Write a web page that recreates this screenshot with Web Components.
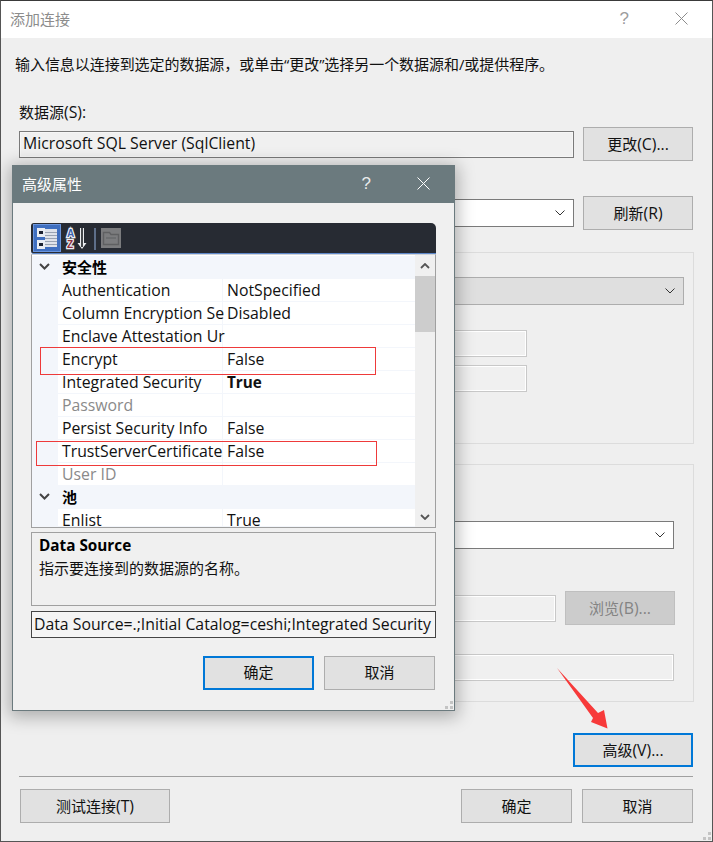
<!DOCTYPE html>
<html><head><meta charset="utf-8">
<style>
html,body{margin:0;padding:0;background:#efefef}
body{width:713px;height:842px;overflow:hidden;font:15px "Open Sans","Noto Sans CJK SC",sans-serif;color:#111}
</style></head><body>
<add-connection></add-connection>
<script>
const FONT='"Open Sans","Noto Sans CJK SC",sans-serif';
function def(name,css,html){
  customElements.define(name,class extends HTMLElement{
    constructor(){super();const s=this.attachShadow({mode:'open'});
      s.innerHTML='<style>'+css+'</style>'+(typeof html==='function'?html(this):html);}
  });
}
def('win-button',`
:host{display:flex;box-sizing:border-box;height:34px;align-items:center;justify-content:center;background:#e1e1e1;border:1px solid #adadad;font:15px ${FONT};color:#111;white-space:nowrap;padding-bottom:1px}
:host([primary]){border:2px solid #0078d7}
:host([disabled]){background:#ccc;border-color:#bfbfbf;color:#838383}
`,'<slot></slot>');
def('win-field',`
:host{display:flex;box-sizing:border-box;height:27px;align-items:center;background:#f0f0f0;border:1px solid #7a7a7a;padding:0 0 2px 3px;font:15.8px ${FONT};color:#111;white-space:nowrap;overflow:hidden;box-shadow:inset 0 0 0 1px #f6f6f6}
:host([disabled]){border-color:#c8c8c8;box-shadow:inset 0 0 0 1px #fff}
:host([dark]){border-color:#444;padding-left:2px}
`,'<slot></slot>');
def('win-combo',`
:host{display:flex;box-sizing:border-box;height:28px;align-items:center;justify-content:flex-end;background:#fff;border:1px solid #7a7a7a;padding-right:8px}
:host([disabled]){background:#dfdfdf;border-color:#adadad}
svg{display:block}
`,'<svg width="10" height="6" viewBox="0 0 10 6"><path d="M.5.5 5 5 9.5.5" fill="none" stroke="#333" stroke-width="1"/></svg>');
def('win-title',`
:host{display:flex;box-sizing:border-box;height:37px;align-items:center;padding:0 24px 2px 9px;background:#fff;color:#8c8c8c;font:15px ${FONT}}
:host([active]){background:#6b7a7e;color:#fff;padding-left:9px}
.t{flex:1}
.q{font:17px "Liberation Sans",sans-serif;margin-right:46px;opacity:.85}
svg{display:block}
`,`<span class="t"><slot></slot></span><span class="q">?</span><svg width="13" height="13" viewBox="0 0 13 13"><path d="M.5.5 12.500 12.500M12.500.5.5 12.500" stroke="currentColor" stroke-width="1" fill="none"/></svg>`);
def('group-box',`
:host{display:block;box-sizing:border-box;border:1px solid #dcdcdc}
`,'<slot></slot>');
def('prop-cat',`
:host{display:flex;box-sizing:border-box;height:23px;background:#f3f6fb;align-items:center;font:bold 15px ${FONT};color:#000;padding-bottom:2px}
.c{width:30px;display:flex;box-sizing:border-box;padding-left:7px}
svg{display:block}
`,`<span class="c"><svg width="11" height="7" viewBox="0 0 11 7"><path d="M1 1l4.500 4.500L10 1" fill="none" stroke="#444" stroke-width="2"/></svg></span><slot></slot>`);
def('prop-row',`
:host{display:flex;box-sizing:border-box;height:23px;background:#fff;font:15.8px ${FONT};color:#111;position:relative;box-shadow:inset 0 -1px 0 #f3f6fb}
.g{width:26px;background:#f3f6fb;flex:none}
.n{box-sizing:border-box;width:165px;padding:0 0 2px 4px;border-right:1px solid #f3f6fb;white-space:nowrap;display:flex;align-items:center;flex:none}
.v{padding:0 0 2px 4px;white-space:nowrap;display:flex;align-items:center}
:host([dim]) .n{color:#8a8a8a}
:host([strong]) .v{font-weight:bold;font-size:15.3px}
:host([short]){height:18px;line-height:14px}
:host([short]) .n,:host([short]) .v{padding-top:4px;padding-bottom:0;line-height:14px}
`,el=>`<span class="g"></span><span class="n">${el.getAttribute('name')}</span><span class="v">${el.getAttribute('value')||''}</span>`);
def('prop-toolbar',`
:host{display:flex;box-sizing:border-box;height:31px;background:#272b33;border-radius:3px 5px 0 3px;border-bottom:1px solid #5d87c9;padding:1px 2px 0 2px;align-items:flex-start}
svg{display:block}
text{font:bold 10px "Liberation Sans",sans-serif;paint-order:stroke;stroke:#eef1f6;stroke-width:2.5px}
`,`<svg width="120" height="28" viewBox="0 0 120 28">
<rect x=".5" y=".5" width="27" height="27" fill="#3f6fc0" stroke="#6a95dd"/>
<g fill="#dfe3ea"><rect x="12" y="5" width="12" height="18"/></g>
<g fill="#9aa3b2"><rect x="12" y="8" width="12" height="1"/><rect x="12" y="11" width="12" height="1"/><rect x="12" y="14" width="12" height="1"/><rect x="12" y="17" width="12" height="1"/><rect x="12" y="20" width="12" height="1"/></g>
<rect x="4" y="4" width="8" height="9" fill="#e9edf3"/><rect x="4" y="16" width="8" height="9" fill="#e9edf3"/>
<rect x="6" y="7" width="4" height="3" fill="#1c2230"/><rect x="6" y="19" width="4" height="3" fill="#1c2230"/>
<text x="34" y="13" fill="#3b62ad">A</text><text x="34" y="24" fill="#8e2f3e">Z</text>
<path d="M47 4h4v15h2.500l-4.500 6-4.500-6H47z" fill="#eceef1"/><path d="M49 4v19" stroke="#1b1d22" stroke-width="1.600"/>
<rect x="61" y="4" width="2" height="22" fill="#5e6f8a"/>
<rect x="68" y="4" width="20" height="20" fill="#7b7c7e"/><path d="M70.500 8.500h6l1.500 2h7.500v10h-15z" fill="none" stroke="#5f6062" stroke-width="1.400"/><path d="M73 14h10" stroke="#5f6062"/>
</svg>`);
def('prop-scroll',`
:host{display:flex;flex-direction:column;box-sizing:border-box;width:20px;background:#f0f0f0;align-items:center;flex:none}
.a{height:21px;width:100%;display:flex;align-items:center;justify-content:center}
.th{height:56px;width:100%;background:#cdcdcd}
.sp{flex:1}
svg{display:block}
`,`<div class="a"><svg width="10" height="6" viewBox="0 0 10 6"><path d="M1 5l4-4 4 4" fill="none" stroke="#555" stroke-width="1.800"/></svg></div><div class="th"></div><div class="sp"></div><div class="a"><svg width="10" height="6" viewBox="0 0 10 6"><path d="M1 1l4 4 4-4" fill="none" stroke="#555" stroke-width="1.800"/></svg></div>`);
def('prop-grid',`
:host{display:flex;box-sizing:border-box;height:274px;border:1px solid #a0a0a0;border-top-color:#cfd3d8;background:#fff}
.rows{flex:1;min-width:0;padding-top:1px;box-sizing:border-box}
`,`<div class="rows"><slot></slot></div><prop-scroll></prop-scroll>`);
def('grip-mark',`
:host{display:block;position:absolute;right:1px;bottom:1px;width:8px;height:8px}
svg{display:block}
`,`<svg width="8" height="8" fill="#c4c4c4"><rect x="5" y="0" width="3" height="3"/><rect x="0" y="5" width="3" height="3"/><rect x="5" y="5" width="3" height="3"/></svg>`);
def('advanced-props',`
:host{display:block;position:absolute;left:11px;top:164px;width:443px;height:546px;box-sizing:border-box;border:1px solid #6b7a7e;background:#f0f0f0;box-shadow:0 3px 16px 3px rgba(0,0,0,.28);z-index:2}
.body{padding:20px 18px 0 18px;position:relative}
.desc{box-sizing:border-box;height:74px;margin-top:4px;border:1px solid #a0a0a0;padding:1px 7px 0;font:15px/23px ${FONT};color:#111}
.desc b{display:block;color:#000;font-size:15.3px}
win-field{margin-top:5px;background:#f4f4f4}
.btns{display:flex;justify-content:flex-end;gap:10px;margin-top:18px;padding-right:1px}
win-button{width:111px;padding-bottom:3px}
.mark{position:absolute;box-sizing:border-box;border:1px solid #ee3a3a;z-index:3}
`,`<win-title active>高级属性</win-title>
<div class="body">
<prop-toolbar></prop-toolbar>
<prop-grid>
<prop-cat>安全性</prop-cat>
<prop-row name="Authentication" value="NotSpecified"></prop-row>
<prop-row name="Column Encryption Se" value="Disabled"></prop-row>
<prop-row name="Enclave Attestation Ur"></prop-row>
<prop-row name="Encrypt" value="False"></prop-row>
<prop-row name="Integrated Security" value="True" strong></prop-row>
<prop-row name="Password" dim></prop-row>
<prop-row name="Persist Security Info" value="False"></prop-row>
<prop-row name="TrustServerCertificate" value="False"></prop-row>
<prop-row name="User ID" dim></prop-row>
<prop-cat>池</prop-cat>
<prop-row name="Enlist" value="True" short></prop-row>
</prop-grid>
<div class="desc"><b>Data Source</b>指示要连接到的数据源的名称。</div>
<win-field dark>Data Source=.;Initial Catalog=ceshi;Integrated Security</win-field>
<div class="btns"><win-button primary>确定</win-button><win-button>取消</win-button></div>
<div class="mark" style="left:27px;top:144px;width:336px;height:28px"></div>
<div class="mark" style="left:23px;top:238px;width:341px;height:25px"></div>
</div>
<grip-mark></grip-mark>`);
def('add-connection',`
:host{display:block;position:relative;box-sizing:border-box;width:713px;height:842px;background:#efefef;border:1px solid #555;border-top-color:#3a3a3a;font:15px ${FONT};color:#111;overflow:hidden}
.l{font-size:15.8px}
.main{padding:0 19px 0 18px}
.intro{margin:16px 0 0 -4px;line-height:20px;height:20px;white-space:nowrap;letter-spacing:-.05px}
.lab{margin-top:28px;line-height:20px;height:20px}
.row{display:grid;grid-template-columns:555px 110px;column-gap:9px;align-items:center}
.r1{margin-top:5px}
.r2{margin-top:35px}
.g1{margin-top:22px;height:192px;display:flex;flex-direction:column;padding:24px 9px 0 0;align-items:flex-end;width:675px;box-sizing:border-box}
.g1 win-combo{width:664px}
.g1 .in{align-self:flex-start;width:507px;margin-top:25px}
.g1 .in + .in{margin-top:8px}
.g2{margin-top:20px;height:238px;width:675px;box-sizing:border-box;padding:56px 0 0 0}
.cb{display:flex;justify-content:flex-end;padding-right:19px}
.g2 win-combo{width:654px}
.g2row{display:flex;gap:9px;align-items:center;margin-top:42px}
.g2row win-field{width:536px}
.g2row win-button{width:110px}
.g2 .last{width:654px;margin-top:29px}
.adv{display:flex;justify-content:flex-end;margin-top:31px}
.adv win-button{width:120px}
hr{border:0;height:1px;background:#a0a0a0;margin:9px 0 0 0;width:674px}
.foot{display:flex;margin:12px 0 0 1px;gap:10px;width:673px}
.foot .t{width:150px;margin-right:auto}
.foot .b{width:111px}
.arrow{position:absolute;left:544px;top:659px;z-index:3;display:block}
`,`<win-title>添加连接</win-title>
<div class="main">
<div class="intro">输入信息以连接到选定的数据源，或单击“更改”选择另一个数据源和/或提供程序。</div>
<div class="lab">数据源<span class="l">(S):</span></div>
<div class="row r1"><win-field>Microsoft SQL Server (SqlClient)</win-field><win-button>更改<span class="l">(C)...</span></win-button></div>
<div class="row r2"><win-combo></win-combo><win-button>刷新<span class="l">(R)</span></win-button></div>
<group-box class="g1"><win-combo disabled></win-combo><win-field class="in" disabled></win-field><win-field class="in" disabled></win-field></group-box>
<group-box class="g2"><div class="cb"><win-combo></win-combo></div>
<div class="g2row"><win-field disabled></win-field><win-button disabled>浏览<span class="l">(B)...</span></win-button></div>
<win-field class="last" disabled></win-field></group-box>
<div class="adv"><win-button primary>高级<span class="l">(V)...</span></win-button></div>
<hr>
<div class="foot"><win-button class="t">测试连接<span class="l">(T)</span></win-button><win-button class="b">确定</win-button><win-button class="b">取消</win-button></div>
</div>
<svg class="arrow" width="70" height="75" viewBox="0 0 70 75"><path d="M12 8 53 53 59 50 62.500 68.500 46 62 48 58z" fill="#f73a3a"/></svg>
<advanced-props></advanced-props>
<grip-mark></grip-mark>`);
</script>
</body></html>
